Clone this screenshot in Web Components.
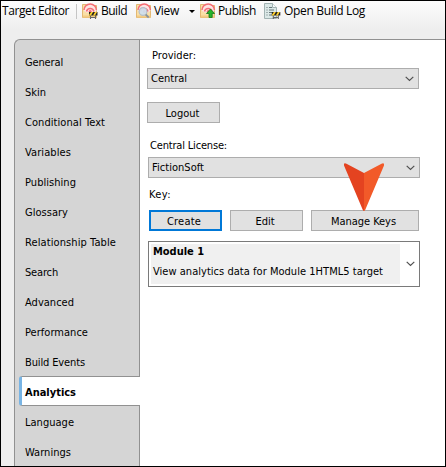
<!DOCTYPE html>
<html lang="en"><head><meta charset="utf-8"><title>Target Editor</title>
<style>html,body{margin:0;width:446px;height:467px;overflow:hidden}</style></head><body>
<target-editor></target-editor>
<script>
const define=(name,html,setup)=>customElements.define(name,class extends HTMLElement{
  connectedCallback(){
    if(this.shadowRoot)return;
    this.attachShadow({mode:'open'}).innerHTML=html;
    if(setup)setup(this,this.shadowRoot);
  }
});
// Tracks a single line of text so that it fills the width in its "w" attribute.
define('ui-text','<style>:host{display:inline-block;white-space:pre;flex:none}span{display:inline-block}</style><span></span>',(el,r)=>{
  const s=r.querySelector('span');s.textContent=el.getAttribute('t');
  const w=+el.getAttribute('w');
  const n=s.getBoundingClientRect().width;
  s.style.letterSpacing=((w-n)/s.textContent.length)+'px';
  el.style.width=w+'px';
});
const folder='<path d="M.5 1.500h4l1 1h9v12H.5z" fill="#f9dfa6" stroke="#e3b873"/><path d="M1 12.500h13.500v2H1z" fill="#f3cc85"/><path d="M2 8a6.200 6.500 0 0 1 12.400 0L12 9.500H4.500z" fill="#fde3e3"/><path d="M2 7a6.200 6 0 0 1 12.400 0M4.500 8.500a3.800 3.800 0 0 1 7.400 0" fill="none" stroke="#f56c76" stroke-width="1.500"/><circle cx="8.200" cy="8.500" r="1.500" fill="#f56c76"/>';
const barrier='<path d="M8.500 12.500v3.500M13.500 12.500v3.500M8 14.500h6" stroke="#666" fill="none" stroke-width="1.100"/><path d="M7 9h8.500v3.500H7z" fill="#222"/><path d="M7 12l2-3h2L9 12.500H7zM11 12.500L13 9h2l-2 3.500z" fill="#ffd22e"/>';
const icons={
 build:folder+barrier,
 view:folder+'<circle cx="7" cy="8.500" r="3.900" fill="#cfe0ed" fill-opacity=".93" stroke="#b4bfc9" stroke-width="1.200"/><path d="M9.700 11.500l3 3" stroke="#8c949c" stroke-width="1.800"/>',
 publish:folder+'<path d="M10.500 6l4 4.500h-2.300V14.500H9v-4H6.500z" fill="#27b52b" stroke="#14791a" stroke-width=".8"/>',
 log:'<path d="M.5.500h8l4 4v11H.5z" fill="#dbe8e7" stroke="#a2b3b3"/><path d="M8.500.500v4h4" fill="#f7fbfb" stroke="#a2b3b3"/><path d="M2.500 4.500h1M5 4.500h3M2.500 7h1M5 7h5M2.500 9.500h1M5 9.500h3M2.500 12h1M5 12h3" stroke="#68797b"/><g transform="translate(.8 0)">'+barrier+'</g>'
};
define('tool-icon','<style>:host{display:block;flex:none;width:17px;height:17px}svg{display:block;overflow:visible}</style><svg width="16" height="16" viewBox="0 0 16 16"></svg>',(el,r)=>{r.querySelector('svg').innerHTML=icons[el.getAttribute('name')]});
define('tool-bar',`<style>
:host{display:flex;align-items:flex-start;height:38px;background:linear-gradient(#fcfcfc,#eee 28px);font:12px/16px "Open Sans",sans-serif;color:#000}
ui-text{margin-top:2px}tool-icon{margin-top:2px}
.sep{width:1px;height:15px;margin:3px 5px 0 7px;background:#c5c5c5}
.drop{width:0;height:0;border:3px solid transparent;border-top-color:#000;border-bottom:0;margin:9px 5px 0 10px}
</style><ui-text t="Target Editor" w="67" style="margin-left:1px"></ui-text><div class="sep"></div>
<tool-icon name="build"></tool-icon><ui-text t="Build" w="26" style="margin-left:2px"></ui-text>
<tool-icon name="view" style="margin-left:9px"></tool-icon><ui-text t="View" w="25" style="margin-left:1px"></ui-text><div class="drop"></div>
<tool-icon name="publish"></tool-icon><ui-text t="Publish" w="38" style="margin-left:1px"></ui-text>
<tool-icon name="log" style="margin-left:8px"></tool-icon><ui-text t="Open Build Log" w="81" style="margin-left:3px"></ui-text>`);
define('side-tabs',`<style>
:host{display:block;box-sizing:border-box;width:126px;height:427px;flex:none;overflow:hidden;border:solid #919191;border-width:1px 0 0 1px;border-radius:6px 0 0 0;background:#d5d5d5}
.item{display:flex;align-items:center;box-sizing:border-box;height:30px;padding:4px 0 0 10px;border-right:1px solid #919191}
.pad{height:6px;border-right:1px solid #919191}
.active{margin-left:4px;padding:4px 0 0 3px;background:#fff;border:solid #919191;border-width:1px 0;border-left:3px solid #78b4e4;border-radius:3px 0 0 3px;font-weight:bold}
</style><div class="pad"></div><div class="list"></div>`,(el,r)=>{
 const items=[['General',38],['Skin',21],['Conditional Text',80],['Variables',46],['Publishing',51],['Glossary',43],['Relationship Table',91],['Search',33],['Advanced',49],['Performance',63],['Build Events',60],['Analytics',51],['Language',49],['Warnings',46]];
 r.querySelector('.list').innerHTML=items.map(([t,w])=>`<div class="item ${t=='Analytics'?'active':''}"><ui-text t="${t}" w="${w}"></ui-text></div>`).join('');
});
define('chevron-icon','<style>:host{display:block;margin-left:auto;flex:none}svg{display:block}</style><svg width="9" height="6" viewBox="0 0 9 6"><path d="M.7.900l3.800 3.600L8.300.900" fill="none" stroke="#505050" stroke-width="1.200"/></svg>');
define('select-box','<style>:host{display:flex;align-items:center;box-sizing:border-box;width:272px;height:21px;padding:0 4px 0 3px;border:1px solid #adadad;background:#e1e1e1}</style><slot></slot><chevron-icon></chevron-icon>');
define('push-button','<style>:host{display:flex;align-items:center;justify-content:center;box-sizing:border-box;width:73px;height:21px;padding-top:1px;border:1px solid #adadad;background:#e1e1e1}:host([focused]){border:2px solid #0078d7}</style><slot></slot>');
define('module-box',`<style>:host{display:flex;align-items:center;box-sizing:border-box;width:272px;height:46px;padding:2px 4px 2px 2px;border:1px solid #7a7a7a;background:#fff}
.info{box-sizing:border-box;width:249px;height:40px;padding:1px 0 0 2px;background:#f0f0f0;display:flex;flex-direction:column;line-height:14px}
.title{font-weight:bold}.desc{margin-top:6px}</style>
<div class="info"><ui-text class="title" t="Module 1" w="51"></ui-text><ui-text class="desc" t="View analytics data for Module 1HTML5 target" w="230"></ui-text></div><chevron-icon></chevron-icon>`);
define('analytics-panel',`<style>
:host{display:flex;flex-direction:column;box-sizing:border-box;flex:1;height:427px;border-top:1px solid #919191;background:#fff;padding:9px 0 0 8px;line-height:13px}
.row{display:flex;gap:8px;margin:9px 0 0 1px}
</style>
<ui-text t="Provider:" w="44" style="margin-left:4px"></ui-text>
<select-box style="margin:6px 0 0 -1px"><ui-text t="Central" w="43" style="margin-left:-1px"></ui-text></select-box>
<push-button style="margin:13px 0 0 -1px"><ui-text t="Logout" w="34" style="margin-right:2px"></ui-text></push-button>
<ui-text t="Central License:" w="77" style="margin:16px 0 0 2px"></ui-text>
<select-box style="margin-top:5px"><ui-text t="FictionSoft" w="52"></ui-text></select-box>
<ui-text t="Key:" w="22" style="margin:10px 0 0 1px"></ui-text>
<div class="row"><push-button focused><ui-text t="Create" w="34" style="margin-right:3px"></ui-text></push-button><push-button><ui-text t="Edit" w="19" style="margin-right:3px"></ui-text></push-button><push-button style="width:108px"><ui-text t="Manage Keys" w="65" style="margin-right:3px"></ui-text></push-button></div>
<module-box style="margin-top:10px"></module-box>`.replace('w="43" style="margin-left:-1px"','w="36"'));
define('callout-arrow','<style>:host{position:absolute;left:342px;top:161px}svg{display:block}</style><svg width="42" height="50" viewBox="0 0 42 50"><path d="M21 11L3.500 1.700Q.3.500 1 3.500L19.200 46.500Q20 49 21 49z" fill="#e44320"/><path d="M21 11L38.500 1.700Q41.700.500 41 3.500L22.800 46.500Q22 49 21 49z" fill="#f25a29"/></svg>');
define('target-editor',`<style>
:host{display:block;position:relative;box-sizing:border-box;width:446px;height:467px;border:1px solid #000;overflow:hidden;background:#eee;color:#000;font:11px/14px "DejaVu Sans Condensed","DejaVu Sans",sans-serif}
.body{display:flex;padding-left:13px}
</style><tool-bar></tool-bar><div class="body"><side-tabs></side-tabs><analytics-panel></analytics-panel></div><callout-arrow></callout-arrow>`);
</script></body></html>
